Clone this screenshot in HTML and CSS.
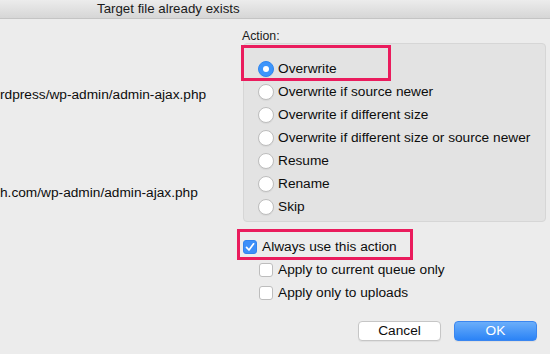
FILE: index.html
```html
<!DOCTYPE html>
<html lang="en">
<head>
  <meta charset="UTF-8" />
  <title>Target file already exists</title>
  <link rel="stylesheet" href="styles.css">
</head>
<body>
  <div class="window">
    <div class="titlebar">Target file already exists</div>

    <div class="content">
      <div class="files">
        <div class="path path-local">rdpress/wp-admin/admin-ajax.php</div>
        <div class="path path-remote">h.com/wp-admin/admin-ajax.php</div>
      </div>

      <div class="options">
        <div class="label">Action:</div>
        <div class="group">
          <div class="row selected">
            <span class="radio on"></span>Overwrite
            <span class="mark mark-radio"></span>
          </div>
          <div class="row"><span class="radio"></span>Overwrite if source newer</div>
          <div class="row"><span class="radio"></span>Overwrite if different size</div>
          <div class="row"><span class="radio"></span>Overwrite if different size or source newer</div>
          <div class="row"><span class="radio"></span>Resume</div>
          <div class="row"><span class="radio"></span>Rename</div>
          <div class="row"><span class="radio"></span>Skip</div>
        </div>

        <div class="checks">
          <div class="row check-row">
            <span class="check on">
              <svg viewBox="0 0 14 14" width="14" height="14"><path d="M3.5 7.3 L6 10 L10.6 3.8" fill="none" stroke="#fff" stroke-width="1.7" stroke-linecap="round" stroke-linejoin="round"/></svg>
            </span>Always use this action
            <span class="mark mark-check"></span>
          </div>
          <div class="row check-row sub"><span class="check"></span>Apply to current queue only</div>
          <div class="row check-row sub"><span class="check"></span>Apply only to uploads</div>
        </div>

        <div class="buttons">
          <div class="btn">Cancel</div>
          <div class="btn btn-ok">OK</div>
        </div>
      </div>
    </div>
  </div>
</body>
</html>
```

FILE: styles.css
```css
body {
  margin: 0;
  background: #ececec;
  font-family: 'Liberation Sans', Arial, sans-serif;
  color: #0d0d0d;
}

.window {
  width: 550px;
  height: 354px;
  overflow: hidden;
  background: #ececec;
}

.titlebar {
  height: 18px;
  line-height: 18px;
  padding-left: 97px;
  font-size: 13.3px;
  color: #1a1a1a;
  background: linear-gradient(#ececec, #d6d6d6);
  border-bottom: 1px solid #c4c4c4;
}

.content {
  display: flex;
  font-size: 13.7px;
}

.files {
  width: 243px;
  flex: none;
  padding-top: 66px;
  overflow: hidden;
  white-space: nowrap;
}

.path {
  height: 20px;
  line-height: 20px;
}

.path-remote {
  margin-top: 78px;
}

.options {
  flex: 1;
  padding-top: 10px;
}

.label {
  font-size: 12.3px;
  height: 14px;
  line-height: 14px;
  margin-left: -1px;
  color: #1a1a1a;
}

.group {
  margin-right: 4px;
  padding: 13px 0 3px 14px;
  background: #e3e3e3;
  border: 1px solid #d6d6d6;
  border-radius: 4px;
  height: 161px;
}

.row {
  position: relative;
  display: flex;
  align-items: center;
  height: 23px;
  white-space: nowrap;
}

.radio {
  width: 14px;
  height: 14px;
  border-radius: 50%;
  background: #fff;
  border: 1px solid #bdbdbd;
  margin-right: 4px;
  flex: none;
  display: flex;
  align-items: center;
  justify-content: center;
  box-shadow: 0 1px 1px rgba(0,0,0,0.05);
}

.radio.on {
  background: #3d95fb;
  border-color: #2f86f0;
}

.radio.on::after {
  content: "";
  width: 6px;
  height: 6px;
  border-radius: 50%;
  background: #fff;
}

.checks {
  margin-top: 13px;
}

.check-row.sub {
  padding-left: 16px;
}

.check {
  width: 12px;
  height: 12px;
  border: 1px solid #bdbdbd;
  border-radius: 3px;
  background: #fff;
  margin-right: 5px;
  flex: none;
  position: relative;
}

.check.on {
  background: #3d8ff9;
  border-color: #3283ee;
}

.check.on svg {
  position: absolute;
  left: -1px;
  top: -1px;
}

/* pink annotation boxes */
.mark {
  position: absolute;
  border: 3px solid #ea1c5d;
  pointer-events: none;
}

.mark-radio {
  left: -17px;
  top: -12px;
  width: 144px;
  height: 30px;
}

.mark-check {
  left: -6px;
  top: -6px;
  width: 170px;
  height: 25px;
}

.buttons {
  display: flex;
  justify-content: flex-end;
  gap: 13px;
  margin-top: 17px;
  padding-right: 13px;
}

.btn {
  width: 81px;
  height: 18px;
  line-height: 18px;
  text-align: center;
  font-size: 13.7px;
  background: #fff;
  border: 1px solid #c6c6c6;
  border-radius: 4px;
  box-shadow: 0 1px 1px rgba(0,0,0,0.06);
}

.btn-ok {
  color: #fff;
  background: linear-gradient(#6aaefa, #2b83f6);
  border-color: #3a86f0;
}
```
